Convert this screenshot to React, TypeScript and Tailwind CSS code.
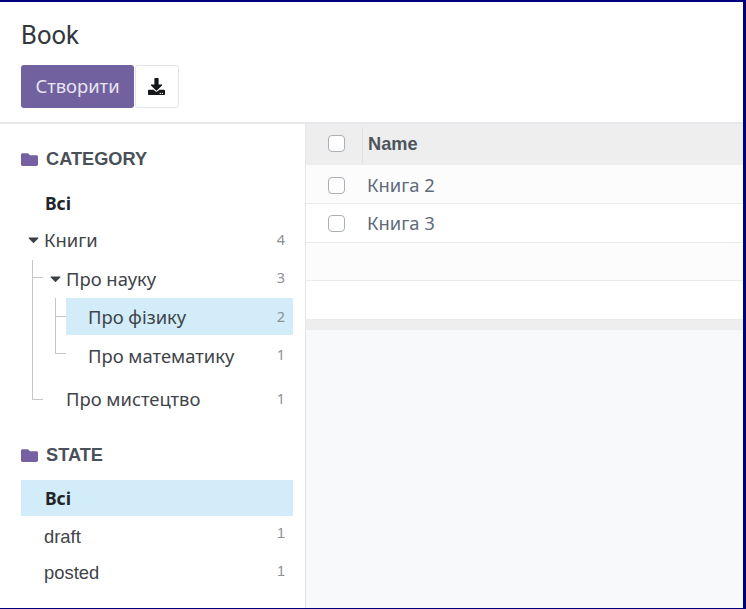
import React from "react";
import { FaDownload, FaFolder, FaCaretDown } from "react-icons/fa";

const noto = "font-['Noto_Sans','Open_Sans',sans-serif]";

function Row({ label, count, caret, bold, active, indent = 0, className = "", countClass = "mt-[-4px]" }: { label: string; count?: string; caret?: boolean; bold?: boolean; active?: boolean; indent?: number; className?: string; countClass?: string }) {
  return (
    <div className={`relative flex items-center justify-between pr-[8px] ${active ? "bg-[#d2ecf9]" : ""} ${className}`} style={{ paddingLeft: indent }}>
      <span className="flex items-center">
        {caret && <FaCaretDown className="mr-[2px] ml-[-19px] text-[17px] text-[#3b4045]" />}
        <span className={`${bold ? "ml-[1px] text-[17.5px] font-bold text-[#212529]" : "text-[18.4px] text-[#3f444a]"}`}>{label}</span>
      </span>
      {count && <span className={`${countClass} text-[14.5px] text-[#8c9196]`}>{count}</span>}
    </div>
  );
}

function Heading({ label, className = "" }: { label: string; className?: string }) {
  return (
    <div className={`flex h-[20px] items-center gap-[8px] ${className}`}>
      <FaFolder className="mt-[-2px] text-[17px] text-[#7460a2]" />
      <span className="font-['Liberation_Sans',sans-serif] text-[18.2px] font-bold text-[#4a5058]">{label}</span>
    </div>
  );
}

function Check() {
  return <span className="block h-[17px] w-[17px] rounded-[4px] border border-[#a9b0b7] bg-white" />;
}

function TableRow({ name, tint, className = "" }: { name?: string; tint?: boolean; className?: string }) {
  return (
    <div className={`flex items-center border-b border-[#e9ecef] ${tint ? "bg-[#fcfcfc]" : "bg-white"} ${className}`}>
      {name && (
        <>
          <span className="flex w-[61px] justify-center"><Check /></span>
          <span className={`${noto} text-[18.4px] text-[#5f6b7a]`}>{name}</span>
        </>
      )}
    </div>
  );
}

export default function App() {
  return (
    <div className={`flex h-[609px] w-[746px] flex-col overflow-hidden border-t-2 border-r-[3px] border-b-[1px] border-[#00007f] bg-white ${noto}`}>
      <header className="h-[122px] shrink-0 border-b-2 border-[#e5e7ea] pl-[21px]">
        <h1 className="mt-[17px] font-['Roboto',sans-serif] text-[25.5px] leading-[32px] text-[#33383d]">Book</h1>
        <div className="mt-[14px] flex gap-[1px]">
          <button className="h-[43px] w-[113px] rounded-[3px] bg-[#71619f] pb-[2px] text-[18.4px] text-[#e8e4f2]">Створити</button>
          <button className="flex h-[43px] w-[44px] items-center justify-center rounded-[3px] border border-[#e2e6ea] bg-white pr-[2px]">
            <FaDownload className="text-[17px] text-[#15181b]" />
          </button>
        </div>
      </header>
      <div className="flex min-h-0 flex-1">
        <aside className="w-[306px] shrink-0 border-r border-[#e3e6ea] bg-white pt-[26px] pr-[12px] pl-[21px]">
          <Heading label="CATEGORY" />
          <div className="mt-[15px]">
            <Row label="Всі" bold indent={23} className="h-[37px]" />
            <Row label="Книги" count="4" caret indent={23} countClass="mt-0" className="h-[37px] pb-[2px]" />
            <div className="relative mt-[1px]">
              <span className="absolute top-0 left-[11px] h-[140px] w-[1px] bg-[#c3c7cc]" />
              <span className="absolute top-[17px] left-[11px] h-[1px] w-[11px] bg-[#c3c7cc]" />
              <span className="absolute top-[139px] left-[11px] h-[1px] w-[11px] bg-[#c3c7cc]" />
              <Row label="Про науку" count="3" caret indent={45} countClass="mt-[-2px]" className="h-[38px]" />
              <div className="relative ml-[45px]">
                <span className="absolute top-0 left-[-11px] h-[56px] w-[1px] bg-[#c3c7cc]" />
                <span className="absolute top-[18px] left-[-11px] h-[1px] w-[11px] bg-[#c3c7cc]" />
                <span className="absolute top-[55px] left-[-11px] h-[1px] w-[11px] bg-[#c3c7cc]" />
                <Row label="Про фізику" count="2" active indent={22} countClass="mt-0" className="h-[37px]" />
                <Row label="Про математику" count="1" indent={22} countClass="mt-[-2px]" className="mt-[3px] h-[37px] pb-[2px]" />
              </div>
              <Row label="Про мистецтво" count="1" indent={45} countClass="mt-0" className="mt-[5px] h-[37px]" />
            </div>
          </div>
          <Heading label="STATE" className="mt-[29px]" />
          <div className="mt-[14px]">
            <Row label="Всі" bold active indent={23} className="h-[36px]" />
            <Row label="draft" count="1" indent={23} countClass="mt-[-6px]" className="mt-[2px] h-[37px] font-['Liberation_Sans',sans-serif]" />
            <Row label="posted" count="1" indent={23} countClass="mt-[-2px]" className="h-[37px] pb-[2px] font-['Liberation_Sans',sans-serif]" />
          </div>
        </aside>
        <main className="flex min-w-0 flex-1 flex-col bg-[#f8f9fb]">
          <div className="flex h-[41px] items-center bg-[#eeeeee]">
            <span className="flex h-[36px] w-[57px] items-center justify-center border-r border-[#e0e0e0] pb-[2px] pl-[4px]"><Check /></span>
            <span className="ml-[5px] font-['Liberation_Sans',sans-serif] text-[18.2px] font-bold text-[#4f555c]">Name</span>
          </div>
          <TableRow name="Книга 2" tint className="h-[39px] pt-[2px]" />
          <TableRow name="Книга 3" className="h-[39px]" />
          <TableRow tint className="h-[38px]" />
          <TableRow className="h-[39px]" />
          <div className="h-[10px] bg-[#eeeeee]" />
        </main>
      </div>
    </div>
  );
}
